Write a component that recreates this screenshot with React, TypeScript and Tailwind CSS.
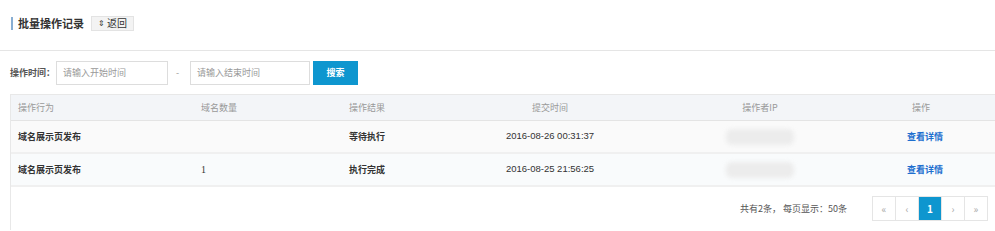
import React from 'react';

const rows = [
  { action: '域名展示页发布', count: '', result: '等待执行', time: '2016-08-26 00:31:37' },
  { action: '域名展示页发布', count: '1', result: '执行完成', time: '2016-08-25 21:56:25' },
];

const cols = 'grid grid-cols-[182px_148px_100px_218px_202px_120px_1fr]';

export default function App() {
  return (
    <div className="w-[995px] h-[231px] bg-white text-[9px] text-[#333] overflow-hidden" style={{ fontFamily: '"Noto Sans CJK SC", "Liberation Sans", sans-serif' }}>
      <div className="flex items-center h-[51px] pl-[11px] pb-[4px] border-b border-[#e5e5e5]">
        <div className="w-[2px] h-[13px] bg-[#88aed3]" />
        <span className="ml-[5px] text-[11px] font-bold text-[#333]">批量操作记录</span>
        <button className="ml-[7px] h-[15px] px-[6px] flex items-center bg-[#f3f3f3] border border-[#e3e3e3] text-[10px] leading-none text-[#333]">
          <span className="text-[8px] mr-[2px]">⇕</span>返回
        </button>
      </div>

      <div className="flex items-center h-[43px] pl-[10px] pt-[1px]">
        <span className="font-bold text-[9px] text-[#555]">操作时间：</span>
        <div className="ml-[1px] w-[112px] h-[24px] border border-[#ddd] flex items-center px-[6px] text-[9px] text-[#999]">请输入开始时间</div>
        <span className="mx-[8px] w-[6px] text-[#999]">-</span>
        <div className="w-[120px] h-[24px] border border-[#ddd] flex items-center px-[6px] text-[9px] text-[#999]">请输入结束时间</div>
        <button className="ml-[3px] w-[45px] h-[24px] bg-[#0e96cf] text-white font-bold text-[9px]">搜索</button>
      </div>

      <div className="ml-[10px] border-l border-t border-[#e8e8e8]">
        <div className={`${cols} h-[26px] items-center bg-[#f3f5f8] border-b border-[#e4e4e4] text-[9px] text-[#999]`}>
          <div className="pl-[7px]">操作行为</div>
          <div className="pl-[8px]">域名数量</div>
          <div className="pl-[8px]">操作结果</div>
          <div className="text-center">提交时间</div>
          <div className="text-center">操作者IP</div>
          <div className="text-center">操作</div>
          <div />
        </div>
        {rows.map((r, i) => (
          <div key={i} className={`${cols} h-[33px] items-center border-b-2 border-[#f0f0f0] ${i === 0 ? 'bg-[#fafafa]' : 'bg-[#f9fbfc]'}`}>
            <div className="pl-[7px] font-bold">{r.action}</div>
            <div className="pl-[8px]" style={{ fontFamily: '"Liberation Serif", serif', fontSize: '10px' }}>{r.count}</div>
            <div className="pl-[8px] font-bold">{r.result}</div>
            <div className="text-center" style={{ fontFamily: '"Liberation Sans", sans-serif', fontSize: '9.5px' }}>{r.time}</div>
            <div className="flex justify-center">
              <div className="w-[68px] h-[16px] rounded-[6px] bg-[#ececec] blur-[2px]" />
            </div>
            <div className="text-center pl-[8px] font-bold text-[#1e6fcf]">查看详情</div>
            <div />
          </div>
        ))}
        <div className="flex items-center justify-end h-[43px] pr-[7px]">
          <span className="text-[9px] text-[#555] mr-[26px]">共有2条， 每页显示：50条</span>
          <div className="flex">
            {['«', '‹', '1', '›', '»'].map((p, i) => (
              <div
                key={i}
                className={`w-[24px] h-[25px] flex items-center justify-center text-[10px] border border-[#e5e5e5] -ml-px ${p === '1' ? 'bg-[#0e96cf] border-[#0e96cf] text-white font-bold' : 'text-[#aaa]'}`}
              >
                {p}
              </div>
            ))}
          </div>
        </div>
      </div>
    </div>
  );
}
